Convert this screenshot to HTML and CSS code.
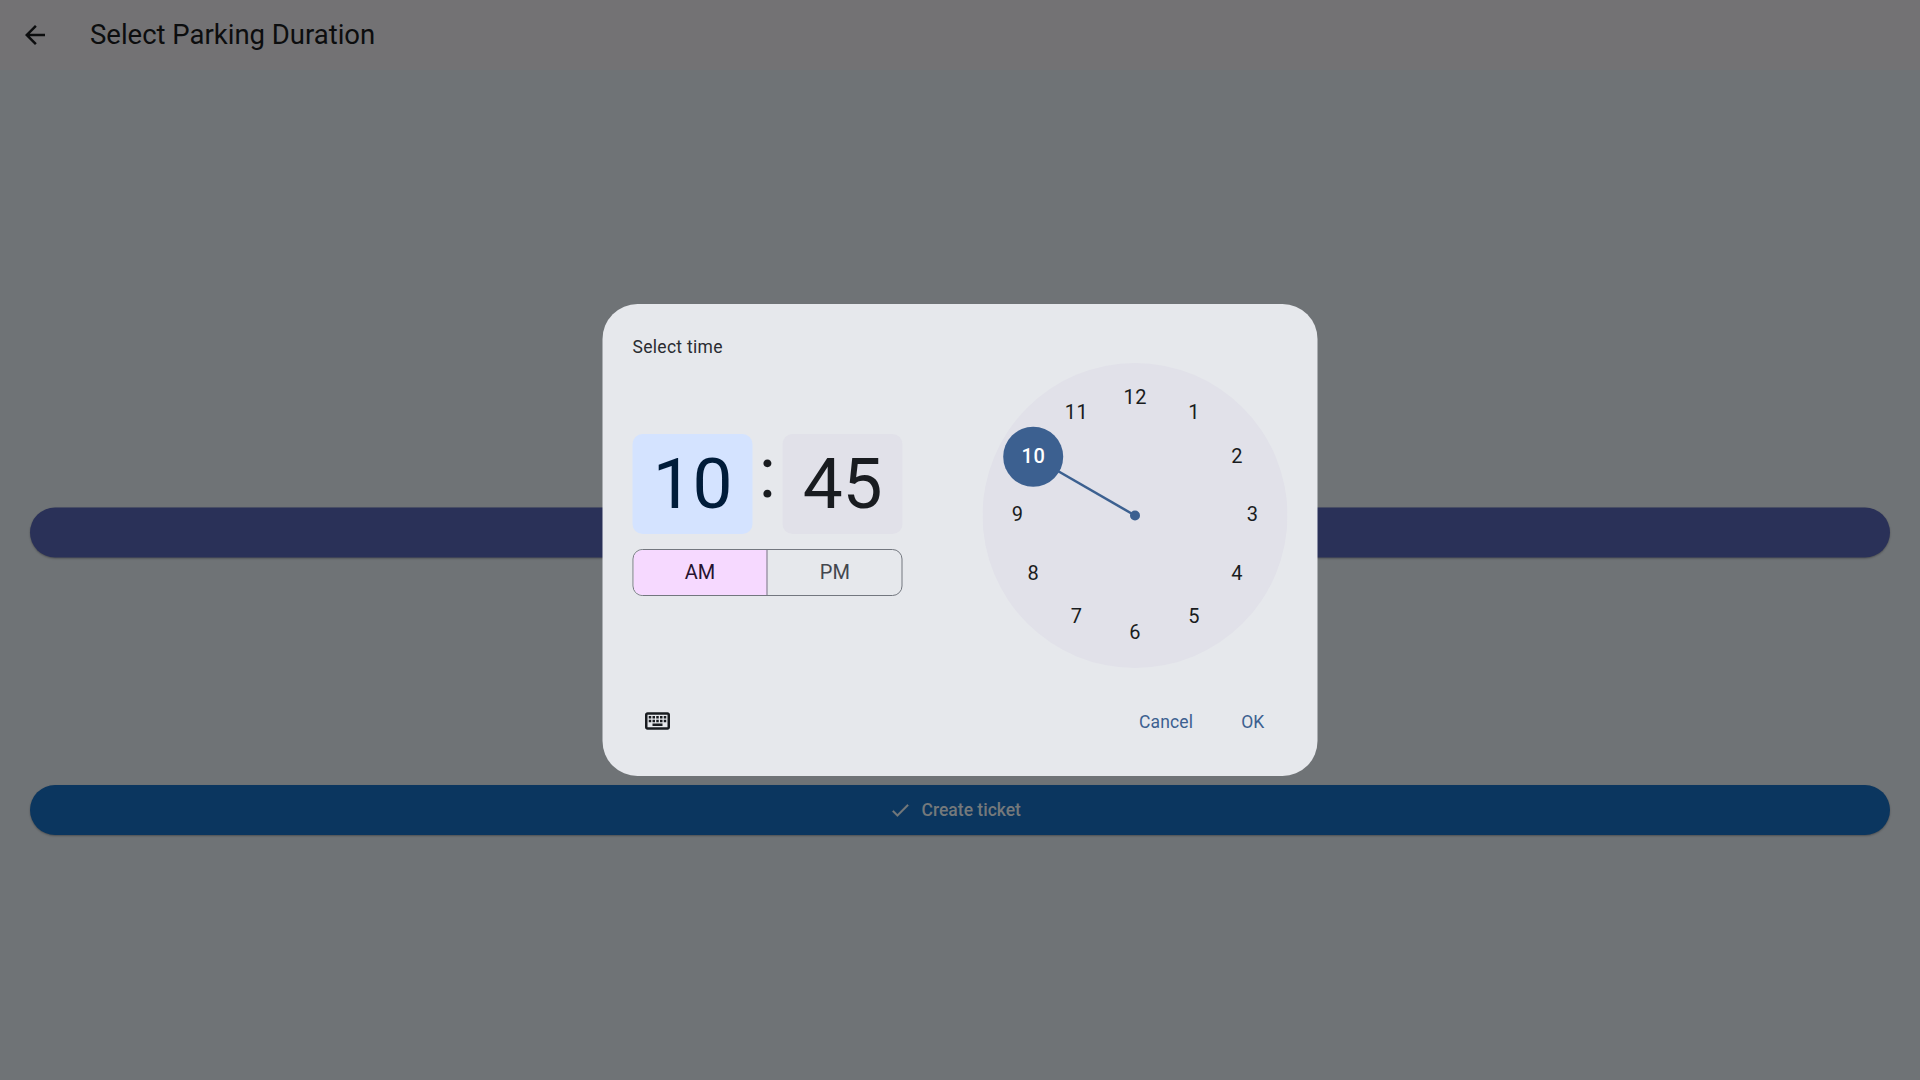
FILE: index.html
```html
<!DOCTYPE html>
<html lang="en">
<head>
<meta charset="utf-8">
<title>Select Parking Duration</title>
<link rel="stylesheet" href="styles.css">
</head>
<body>
<div class="page">
  <header class="app-bar">
    <svg class="back" viewBox="0 0 24 24"><path d="M20 11H7.83l5.59-5.59L12 4l-8 8 8 8 1.41-1.41L7.83 13H20v-2z"/></svg>
    <h1 class="title">Select Parking Duration</h1>
  </header>
  <main class="content">
    <div class="bar bar-time"></div>
    <div class="bar bar-create">
      <svg class="check" viewBox="0 0 24 24"><path d="M9 16.17L4.83 12l-1.42 1.41L9 19 21 7l-1.41-1.41z"/></svg>
      <span>Create ticket</span>
    </div>
  </main>
</div>
<div class="overlay">
  <section class="dialog">
    <div class="picker">
      <div class="controls">
        <div class="label">Select time</div>
        <div class="time">
          <div class="digit digit-active">10</div>
          <div class="colon">:</div>
          <div class="digit">45</div>
        </div>
        <div class="period">
          <div class="half half-active">AM</div>
          <div class="half half-pm">PM</div>
        </div>
      </div>
      <svg class="dial" viewBox="0 0 305 305">
        <circle class="face" cx="152.5" cy="152.5" r="152.5"/>
        <path class="hand" d="M152.5 152.5L50.7 93.75"/>
        <circle class="knob" cx="152.5" cy="152.5" r="5"/>
        <circle class="knob" cx="50.7" cy="93.75" r="30"/>
        <g class="numbers">
          <text x="152.8" y="41">12</text>
          <text x="211.6" y="56">1</text>
          <text x="254.6" y="100">2</text>
          <text x="270.3" y="158">3</text>
          <text x="254.6" y="217">4</text>
          <text x="211.6" y="260">5</text>
          <text x="152.8" y="276">6</text>
          <text x="94.1" y="260">7</text>
          <text x="51" y="217">8</text>
          <text x="35.3" y="158">9</text>
          <text class="picked" x="51" y="100">10</text>
          <text x="94.1" y="56">11</text>
        </g>
      </svg>
    </div>
    <div class="actions">
      <svg class="keyboard" viewBox="0 0 24 24"><path d="M20 5H4c-1.1 0-1.99.9-1.99 2L2 17c0 1.1.9 2 2 2h16c1.1 0 2-.9 2-2V7c0-1.1-.9-2-2-2zm0 12H4V7h16v10zm-9-9h2v2h-2zm0 3h2v2h-2zM8 8h2v2H8zm0 3h2v2H8zm-3 0h2v2H5zm0-3h2v2H5zm3 6h8v2H8zm6-3h2v2h-2zm0-3h2v2h-2zm3 3h2v2h-2zm0-3h2v2h-2z"/></svg>
      <span class="action cancel">Cancel</span>
      <span class="action">OK</span>
    </div>
  </section>
</div>
</body>
</html>
```
FILE: styles.css
```css
* { box-sizing: border-box; }

body {
  margin: 0;
  font-family: Roboto, "Noto Sans", sans-serif;
  background: #6f7376;
}

.page {
  width: 1920px;
  height: 1080px;
  overflow: hidden;
}

.app-bar {
  display: flex;
  align-items: center;
  height: 70px;
  padding-left: 20px;
  gap: 40px;
  background: #737274;
}

.back {
  width: 30px;
  height: 30px;
  fill: #0c0d0e;
}

.title {
  margin: 0 0 2px;
  font-size: 27.5px;
  font-weight: 400;
  line-height: 35px;
  letter-spacing: -0.01px;
  color: #0c0d0e;
}

.content {
  display: flex;
  flex-direction: column;
  gap: 228px;
  padding: 437px 30px 0;
}

.bar {
  display: flex;
  align-items: center;
  justify-content: center;
  gap: 10px;
  height: 50px;
  border-radius: 25px;
  box-shadow: 0 1px 2px rgba(0, 0, 0, 0.3);
}

.bar-time {
  background: #2a3158;
  transform: translateY(0.5px);
}

.bar-create {
  padding-right: 10px;
  background: #0b365f;
  color: #75797b;
  font-size: 17.5px;
  font-weight: 500;
  letter-spacing: 0;
}

.check {
  width: 22.5px;
  height: 22.5px;
  fill: #75797b;
  stroke: #75797b;
  stroke-width: 0.3;
}

.overlay {
  position: absolute;
  inset: 0;
  display: flex;
  align-items: center;
  justify-content: center;
}

.dialog {
  width: 715px;
  height: 472.5px;
  margin-right: 1px;
  padding: 30px;
  border-radius: 35px;
  background: #e6e8ec;
  transform: translateX(0.5px);
}

.picker {
  display: flex;
  justify-content: space-between;
  height: 357.5px;
}

.controls {
  width: 270px;
}

.label {
  height: 25px;
  font-size: 17.5px;
  line-height: 27px;
  letter-spacing: 0.3px;
  color: #2a2c31;
}

.time {
  display: flex;
  margin-top: 75px;
}

.digit {
  width: 120px;
  height: 100px;
  border-radius: 10px;
  background: #e1e1e9;
  color: #191c20;
  font-size: 71.25px;
  line-height: 100px;
  letter-spacing: -0.3px;
  text-align: center;
}

.digit-active {
  background: #d4e3ff;
  color: #001c3a;
}

.colon {
  width: 30px;
  font-size: 71.25px;
  line-height: 77px;
  text-align: center;
  color: #191c20;
}

.period {
  display: flex;
  height: 47.5px;
  margin-top: 15px;
  overflow: hidden;
  border: 1px solid #73777f;
  border-radius: 10px;
}

.half {
  flex: 1;
  font-size: 20px;
  line-height: 45px;
  letter-spacing: 0.1px;
  text-align: center;
  color: #43474e;
}

.half-active {
  border-right: 1px solid #73777f;
  background: #f6d9ff;
  color: #271430;
}

.half-pm { padding-left: 1px; }

.dial {
  width: 305px;
  height: 305px;
  margin-top: 28.75px;
}

.face { fill: #e1e1e9; }

.hand {
  stroke: #3c6090;
  stroke-width: 2.5;
}

.knob { fill: #3c6090; }

.numbers {
  fill: #191c20;
  font-size: 20px;
  letter-spacing: 0.625px;
  text-anchor: middle;
}

.picked {
  fill: #fff;
  font-weight: 500;
}

.actions {
  display: flex;
  align-items: center;
  height: 60px;
  padding: 0 23px 0 10px;
}

.keyboard {
  width: 30px;
  height: 30px;
  fill: #191c20;
}

.action {
  padding-top: 1px;
  font-size: 17.5px;
  letter-spacing: 0.15px;
  color: #3c6090;
}

.cancel {
  margin: 0 48px 0 auto;
}
```
